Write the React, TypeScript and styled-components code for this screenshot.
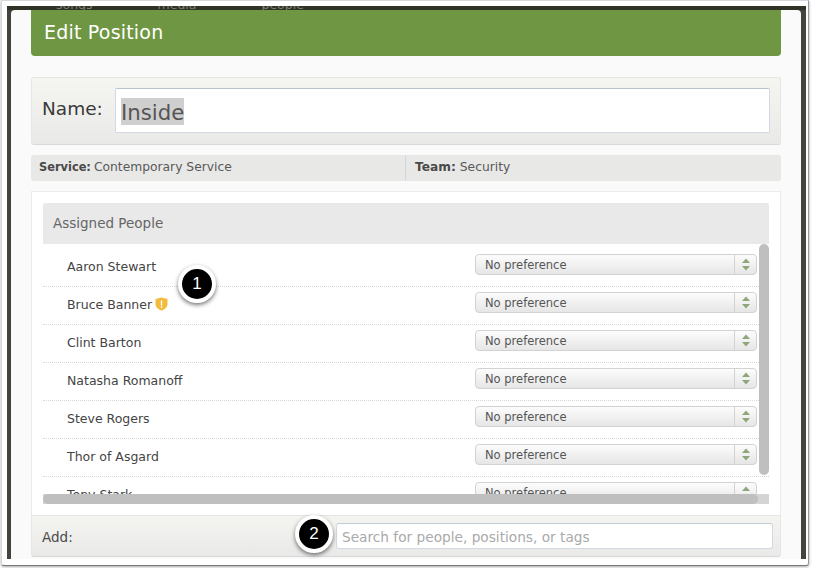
import React from "react";
import styled, { createGlobalStyle } from "styled-components";

const Global = createGlobalStyle`
  html, body { margin: 0; padding: 0; background: #fff; }
  * { box-sizing: border-box; }
  body { font-family: "DejaVu Sans", "Liberation Sans", sans-serif; }
`;

const Page = styled.div`
  position: relative;
  width: 813px;
  height: 568px;
  overflow: hidden;
  background: #fff;
`;
const Frame = styled.div`
  width: 808px;
  height: 566px;
  margin-left: 1px;
  padding: 5px 2px 5px 5px;
  background: #fff;
  border: 1px solid #d8d8d8;
  border-bottom: 1px solid #777;
  border-right: 1px solid #999;
  border-radius: 0 0 3px 3px;
  box-shadow: 0 1px 3px rgba(0, 0, 0, 0.35);
`;
const Backdrop = styled.div`
  height: 553px;
  padding: 4px 5px 0 4px;
  background: #44443f;
  overflow: hidden;
  position: relative;
`;
const NavHint = styled.div`
  position: absolute;
  top: 0;
  left: 0;
  right: 0;
  height: 4px;
  padding-left: 49px;
  display: flex;
  gap: 65px;
  overflow: hidden;
  background: #2f3327;
  color: #7d8072;
  font-size: 12.5px;
  line-height: 4px;
  span { margin-top: -3px; }
`;
const Modal = styled.div`
  position: relative;
  height: 549px;
  padding: 0 20px;
  background: #fafafa;
  border-radius: 4px 4px 0 0;
`;
const Header = styled.div`
  height: 46px;
  padding: 0 0 2px 13px;
  display: flex;
  align-items: center;
  background: #6f9642;
  border-radius: 0 0 4px 4px;
  color: #fff;
  font-size: 19px;
  letter-spacing: 0.2px;
`;
const NamePanel = styled.div`
  margin-top: 21px;
  height: 68px;
  padding: 10px;
  display: flex;
  gap: 11px;
  background: linear-gradient(#f5f5f1, #e9e9e8);
  border: 1px solid #e6e6e2;
  border-bottom-color: #d8d8d8;
  border-radius: 3px;
`;
const NameLabel = styled.label`
  width: 62px;
  padding-top: 10px;
  font-size: 18.5px;
  color: #3a3a3a;
  white-space: nowrap;
`;
const NameBox = styled.div`
  flex: 1;
  height: 45px;
  padding: 9px 5px;
  background: #fff;
  border: 1px solid #d3d9e2;
  border-top-color: #b9c2cf;
  border-radius: 2px;
`;
const Selected = styled.span`
  display: inline-block;
  height: 27px;
  line-height: 29px;
  background: #cfcfcf;
  color: #555;
  font-size: 21.3px;
`;
const InfoBar = styled.div`
  margin-top: 10px;
  height: 26px;
  display: flex;
  align-items: center;
  background: #e8e8e6;
  border-radius: 3px;
  font-size: 12.3px;
  color: #5a5a5a;
`;
const InfoCell = styled.div<{ $w?: number }>`
  height: 100%;
  padding-bottom: 2px;
  display: flex;
  align-items: center;
  gap: ${(p) => (p.$w ? 3 : 4)}px;
  padding-left: ${(p) => (p.$w ? 8 : 9)}px;
  flex: ${(p) => (p.$w ? `0 0 ${p.$w}px` : "1")};
  border-right: ${(p) => (p.$w ? "1px solid #cfd6df" : "none")};
  b { color: #4a4a4a; font-size: ${(p) => (p.$w ? 11.4 : 12.2)}px; }
`;
const ListPanel = styled.div`
  margin-top: 10px;
  height: 324px;
  padding: 11px 11px 0;
  background: #fff;
  border: 1px solid #ebebe8;
  border-bottom: none;
`;
const ListTitle = styled.div`
  height: 41px;
  padding: 0 0 2px 10px;
  display: flex;
  align-items: center;
  background: #e9e9e9;
  border-radius: 2px 2px 0 0;
  font-size: 13.5px;
  color: #666;
`;
const Scroller = styled.div`
  position: relative;
  height: 260px;
  overflow: hidden;
`;
const Rows = styled.div`
  height: 250px;
  padding-top: 5px;
  overflow: hidden;
`;
const Row = styled.div`
  height: 38px;
  padding: 5px 12px 0 24px;
  display: flex;
  align-items: flex-start;
  justify-content: space-between;
  border-bottom: 1px dotted #d8d8dc;
`;
const Person = styled.div`
  padding-top: 5px;
  display: flex;
  align-items: center;
  gap: 3px;
  font-size: 12.5px;
  color: #444;
`;
const SelectBox = styled.div`
  width: 282px;
  height: 21px;
  display: flex;
  align-items: stretch;
  background: linear-gradient(#fcfcfc, #e6e6e6);
  border: 1px solid #d2d2d2;
  border-radius: 4px;
  font-size: 11.5px;
  color: #555;
`;
const SelectText = styled.div`
  flex: 1;
  padding-left: 9px;
  display: flex;
  align-items: center;
`;
const SelectArrows = styled.div`
  width: 22px;
  display: flex;
  align-items: center;
  justify-content: center;
  border-left: 1px solid #d2d2d2;
`;
const ShieldIcon = styled.svg`
  margin-top: -2px;
`;
const VThumb = styled.div`
  position: absolute;
  top: 0;
  right: 0;
  width: 10px;
  height: 231px;
  background: #bfbfbf;
  border-radius: 5px;
`;
const HTrack = styled.div`
  position: absolute;
  left: 0;
  right: 0;
  top: 250px;
  height: 10px;
  background: #d4d4d4;
`;
const HThumb = styled.div`
  width: 715px;
  height: 10px;
  background: #bfbfbf;
  border-radius: 5px;
`;
const AddBar = styled.div`
  height: 42px;
  padding: 0 7px 0 10px;
  display: flex;
  align-items: center;
  justify-content: space-between;
  background: linear-gradient(#f4f4f1, #e9e9e8);
  border: 1px solid #e6e6e2;
  border-bottom-color: #d8d8d8;
  border-radius: 0 0 3px 3px;
  font-size: 13.5px;
  color: #4a4a4a;
`;
const AddLabel = styled.span`
  padding-top: 2px;
`;
const SearchBox = styled.div`
  width: 437px;
  height: 26px;
  padding: 2px 0 0 5px;
  display: flex;
  align-items: center;
  background: #fff;
  border: 1px solid #d3d9e2;
  border-top-color: #c3cbd6;
  border-radius: 3px;
  font-size: 13.7px;
  color: #aaa;
`;
const Callout = styled.div<{ $x: number; $y: number }>`
  position: absolute;
  left: ${(p) => p.$x - 19}px;
  top: ${(p) => p.$y - 19}px;
  width: 38px;
  height: 38px;
  display: flex;
  align-items: center;
  justify-content: center;
  background: #000;
  border: 4px solid #fff;
  border-radius: 50%;
  box-shadow: 0 2px 4px rgba(0, 0, 0, 0.55);
  color: #fff;
  font-family: "Liberation Sans", sans-serif;
  font-size: 17px;
`;

const Arrows = () => (
  <svg width="10" height="13" viewBox="0 0 10 13">
    <path d="M5 0.5 L9 5 H1 Z" fill="#8fa57a" />
    <path d="M5 12.5 L9 8 H1 Z" fill="#8fa57a" />
  </svg>
);
const Shield = () => (
  <ShieldIcon width="13" height="14" viewBox="0 0 13 14">
    <path d="M6.5 0.5 L12.5 2 V7 C12.5 10.5 9 12.7 6.5 13.5 C4 12.7 0.5 10.5 0.5 7 V2 Z" fill="#f3bb3c" />
    <rect x="5.8" y="3.5" width="1.4" height="5" fill="#fff" />
    <rect x="5.8" y="9.4" width="1.4" height="1.5" fill="#fff" />
  </ShieldIcon>
);

const people = ["Aaron Stewart", "Bruce Banner", "Clint Barton", "Natasha Romanoff", "Steve Rogers", "Thor of Asgard", "Tony Stark"];

export default function App() {
  return (
    <Page>
      <Global />
      <Frame>
        <Backdrop>
          <NavHint><span>songs</span><span>media</span><span>people</span></NavHint>
          <Modal>
            <Header>Edit Position</Header>
            <NamePanel>
              <NameLabel>Name:</NameLabel>
              <NameBox><Selected>Inside</Selected></NameBox>
            </NamePanel>
            <InfoBar>
              <InfoCell $w={375}><b>Service:</b> Contemporary Service</InfoCell>
              <InfoCell><b>Team:</b> Security</InfoCell>
            </InfoBar>
            <ListPanel>
              <ListTitle>Assigned People</ListTitle>
              <Scroller>
                <Rows>
                  {people.map((name) => (
                    <Row key={name}>
                      <Person>{name}{name === "Bruce Banner" && <Shield />}</Person>
                      <SelectBox>
                        <SelectText>No preference</SelectText>
                        <SelectArrows><Arrows /></SelectArrows>
                      </SelectBox>
                    </Row>
                  ))}
                </Rows>
                <VThumb />
                <HTrack><HThumb /></HTrack>
              </Scroller>
            </ListPanel>
            <AddBar>
              <AddLabel>Add:</AddLabel>
              <SearchBox>Search for people, positions, or tags</SearchBox>
            </AddBar>
          </Modal>
        </Backdrop>
      </Frame>
      <Callout $x={197} $y={284}>1</Callout>
      <Callout $x={314} $y={534}>2</Callout>
    </Page>
  );
}
